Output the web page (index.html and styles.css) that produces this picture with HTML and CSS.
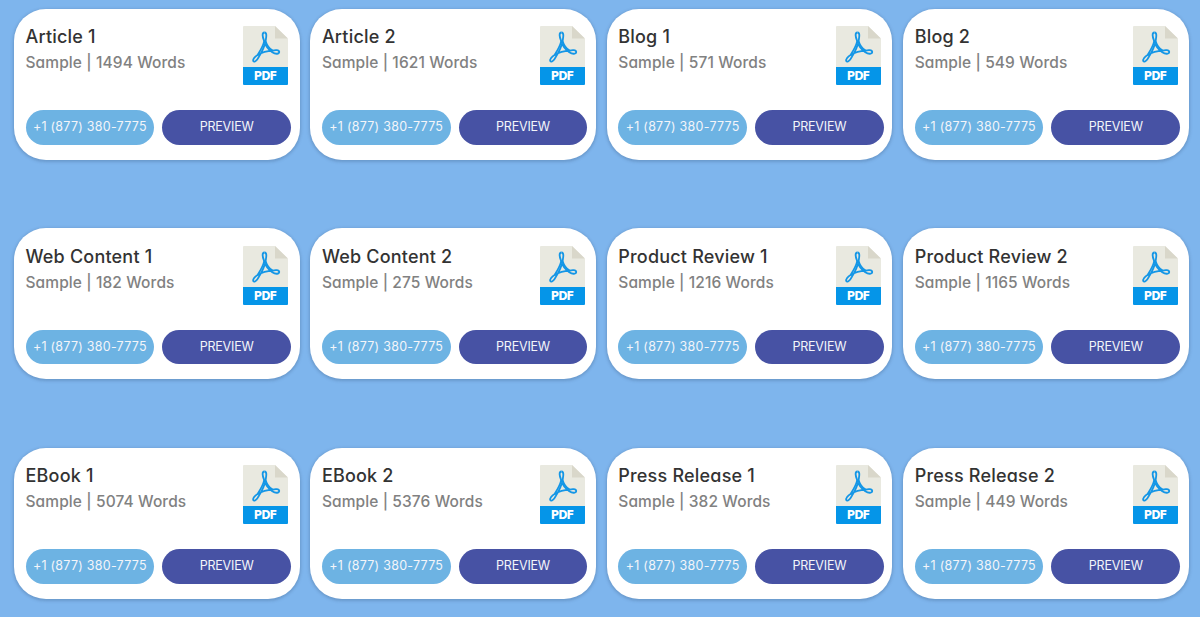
FILE: index.html
```html
<!DOCTYPE html>
<html lang="en">
<head>
    <meta charset="UTF-8">
    <meta name="viewport" content="width=device-width, initial-scale=1.0">
    <title>Writing Samples</title>
    <link rel="stylesheet" href="styles.css">
</head>
<body>
    <div class="samples" id="samples"></div>

    <template id="card">
        <div class="card">
            <div class="card-top">
                <div class="info">
                    <h3 class="title"></h3>
                    <p class="words"></p>
                </div>
                <svg class="pdf" viewBox="0 0 45 59">
                    <path d="M1 0H32L45 13V42H0V1Q0 0 1 0Z" fill="#e9e9e0"/>
                    <path d="M32 0V12.5H45Z" fill="#d9d7ca"/>
                    <g fill="none" stroke="#1496e6" stroke-width="1.8" stroke-linejoin="round">
                        <path d="M21.5 6.5C18.8 6.6 19.3 10.5 21.2 15.2C20.2 20.3 16.8 25.6 14.6 29"/>
                        <path d="M21.5 6.5C24.2 6.7 23.3 11 22.6 15.2C24 19.5 26.6 22.8 29.6 24.6"/>
                        <path d="M21.2 15.2C22.5 20 25.8 23.6 29.3 26.3C32.5 28.4 36.3 28.2 36.2 25.9C36 23.7 32 24 29.6 24.6C24.5 24.8 19 26.2 14.6 29C11.8 30.6 9.5 33.5 10.3 35.1C11.3 37 14.2 34.2 16 30.6C18.8 26 21.5 20.5 22.6 15.2"/>
                    </g>
                    <path d="M0 41H45V58Q45 59 44 59H1Q0 59 0 58Z" fill="#0595e8"/>
                    <text class="pdf-label" x="10.8" y="54.2" textLength="23.5" lengthAdjust="spacing">PDF</text>
                </svg>
            </div>
            <div class="buttons">
                <a class="btn btn-phone">+1 (877) 380-7775</a>
                <a class="btn btn-preview">PREVIEW</a>
            </div>
        </div>
    </template>

    <script>
        const samples = [
            ["Article 1", 1494], ["Article 2", 1621], ["Blog 1", 571], ["Blog 2", 549],
            ["Web Content 1", 182], ["Web Content 2", 275], ["Product Review 1", 1216], ["Product Review 2", 1165],
            ["EBook 1", 5074], ["EBook 2", 5376], ["Press Release 1", 382], ["Press Release 2", 449]
        ];
        const list = document.getElementById("samples");
        const card = document.getElementById("card");

        samples.forEach(([title, words]) => {
            const item = card.content.cloneNode(true);
            item.querySelector(".title").textContent = title;
            item.querySelector(".words").textContent = `Sample | ${words} Words`;
            list.appendChild(item);
        });
    </script>
</body>
</html>
```
FILE: styles.css
```css
* {
    box-sizing: border-box;
}
body {
    margin: 0;
    height: 617px;
    overflow: hidden;
    background: #7eb5ed;
    font-family: Inter, "Open Sans", sans-serif;
    font-feature-settings: "cv11";
}
.samples {
    display: grid;
    grid-template-columns: repeat(4, 285.5px);
    column-gap: 10.9px;
    row-gap: 68.5px;
    padding: 8.5px 0 0 14px;
}
.card {
    height: 151px;
    padding: 17.5px 8.5px 0 11.5px;
    background: white;
    border-radius: 32px;
    box-shadow: 0 1px 3px 1px rgba(60, 90, 130, 0.3);
}
.card-top {
    display: flex;
    justify-content: space-between;
    height: 84px;
    padding-right: 2.6px;
}
.title {
    margin: 0;
    font-size: 18px;
    font-weight: 500;
    line-height: 22px;
    letter-spacing: 0.2px;
    color: #333;
}
.words {
    margin: 4px 0 0;
    font-size: 15.5px;
    font-weight: 500;
    line-height: 22px;
    letter-spacing: 0.1px;
    color: #818181;
}
.pdf {
    width: 45px;
    height: 59px;
}
.pdf-label {
    font: bold 12.5px "DejaVu Sans Condensed", "Noto Sans", sans-serif;
    fill: white;
}
.buttons {
    display: flex;
    gap: 8px;
}
.btn {
    flex: 1;
    height: 34.5px;
    border-radius: 18px;
    font-size: 12.5px;
    line-height: 34px;
    text-align: center;
    white-space: nowrap;
    color: #f3f5fa;
}
.btn-phone {
    background: #6db3e3;
    letter-spacing: 0.25px;
}
.btn-preview {
    background: #4752a4;
    letter-spacing: -0.2px;
}
```
